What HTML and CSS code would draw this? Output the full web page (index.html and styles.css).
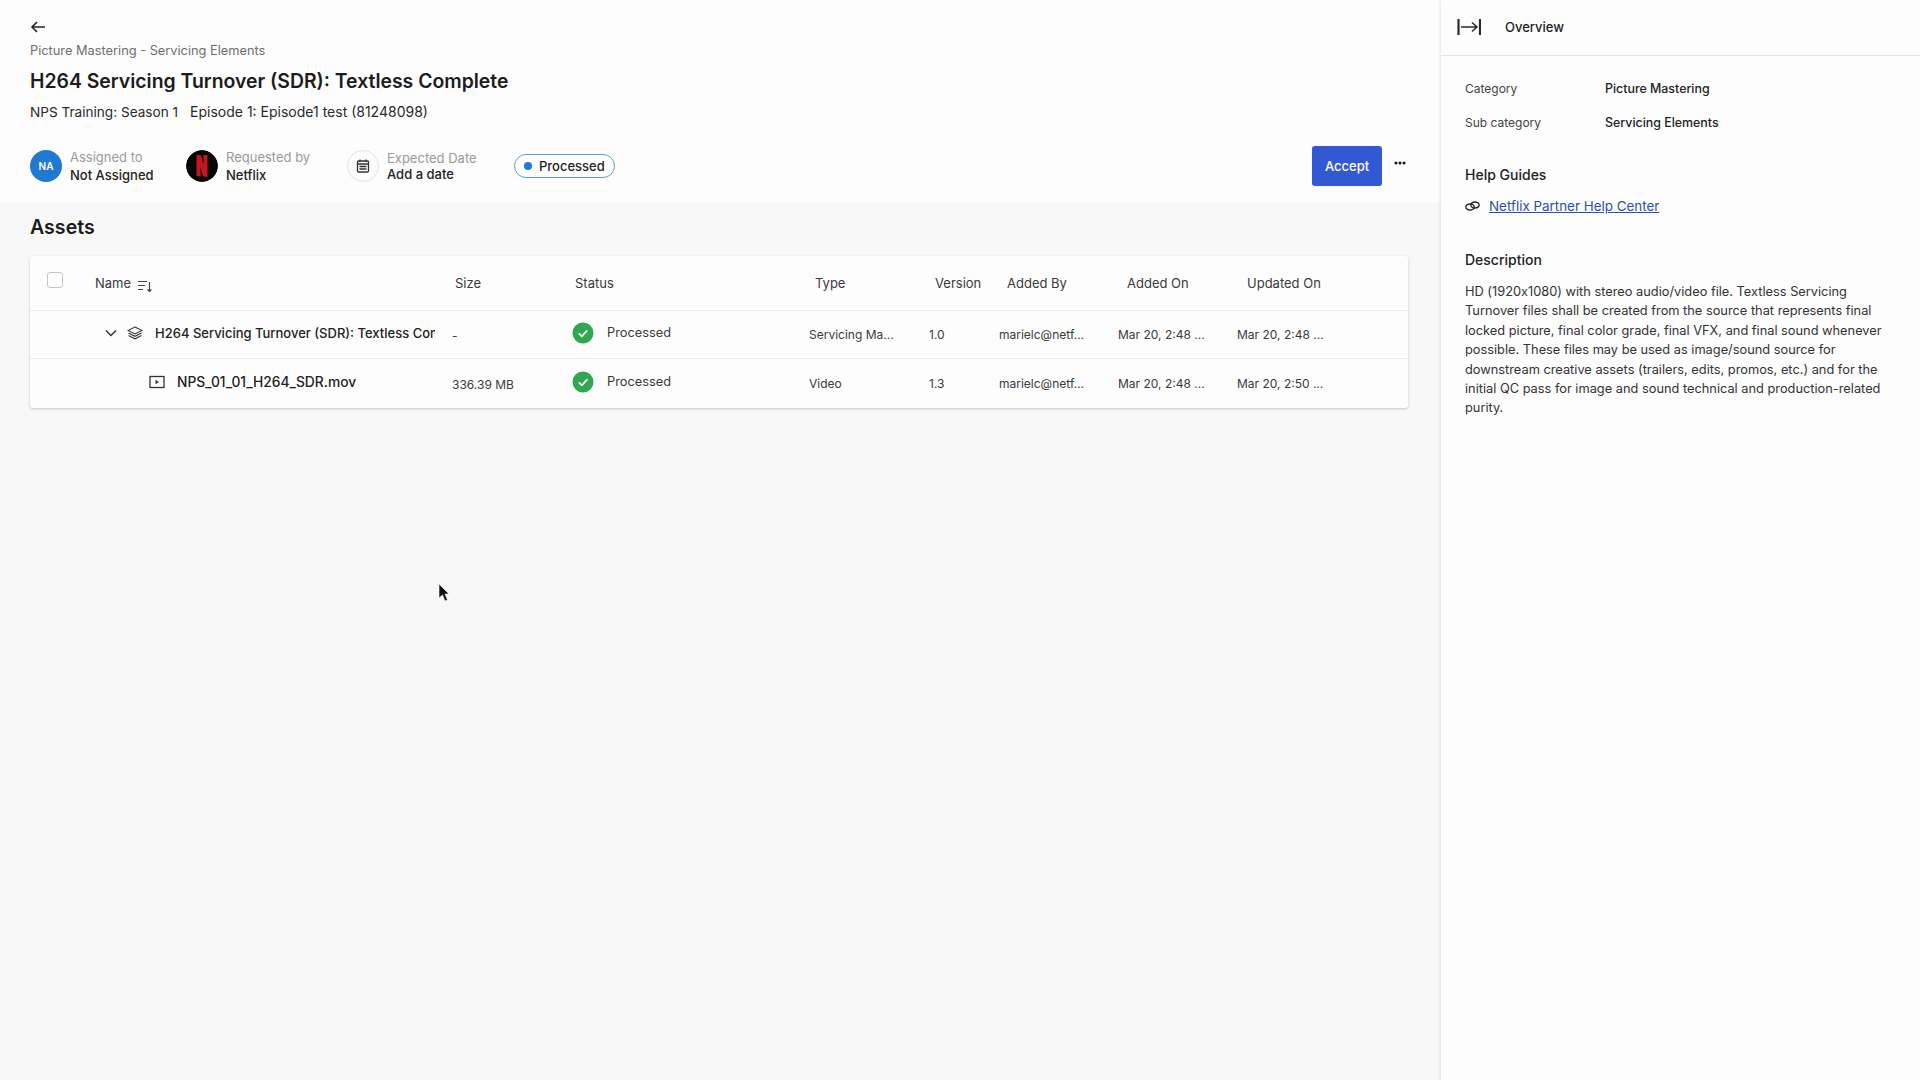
FILE: index.html
```html
<!DOCTYPE html>
<html lang="en">

<head>
	<title>Picture Mastering - Servicing Elements</title>
	<meta charset="utf-8" />
	<link rel="stylesheet" href="styles.css">
</head>

<body>
	<div class="page">
		<main class="main">
			<header class="head">
				<svg class="back" width="16" height="14" viewBox="0 0 16 14" fill="none" stroke="#222" stroke-width="1.6"><path d="M15 7H2M7 2 2 7l5 5"/></svg>
				<div class="crumb">Picture Mastering - Servicing Elements</div>
				<h1>H264 Servicing Turnover (SDR): Textless Complete</h1>
				<div class="sub"><span>NPS Training: Season 1</span><span class="ep">Episode 1: Episode1 test (81248098)</span></div>
				<div class="meta">
					<div class="person assigned">
						<div class="avatar na">NA</div>
						<div><div class="lbl">Assigned to</div><div class="val">Not Assigned</div></div>
					</div>
					<div class="person requested">
						<svg class="avatar" width="32" height="32" viewBox="0 0 32 32"><circle cx="16" cy="16" r="16" fill="#060606"/><path d="M10.500 5h4.200l2.800 9V5h4v22l-4.200-.6-2.800-9V26.400l-4-.5z" fill="#c4161c"/></svg>
						<div><div class="lbl">Requested by</div><div class="val">Netflix</div></div>
					</div>
					<div class="person expected">
						<div class="avatar cal">
							<svg width="14" height="14" viewBox="0 0 14 14" fill="none" stroke="#333" stroke-width="1.300"><rect x="1.500" y="2" width="11" height="11" rx="1"/><path d="M4 .5v2.500M10 .5v2.500M1.500 5h11M3.500 7.500h7M3.500 10h7"/></svg>
						</div>
						<div class="tight"><div class="lbl">Expected Date</div><div class="val">Add a date</div></div>
					</div>
					<div class="pill"><i></i>Processed</div>
					<div class="actions">
						<button class="accept">Accept</button>
						<svg class="dots" width="12" height="4" viewBox="0 0 12 4" fill="#111"><circle cx="2" cy="2" r="1.500"/><circle cx="6" cy="2" r="1.500"/><circle cx="10" cy="2" r="1.500"/></svg>
					</div>
				</div>
			</header>

			<section class="assets">
				<h2>Assets</h2>
				<div class="card">
					<div class="thead">
						<div class="check"></div>
						<div class="th-name">Name
							<svg width="16" height="14" viewBox="0 0 16 14" fill="none" stroke="#444" stroke-width="1.200"><path d="M1 2.500h9M1 6.500h7M1 10.500h5M12.500 3v9.500M10.500 10.500l2 2 2-2"/></svg>
						</div>
						<div>Size</div>
						<div>Status</div>
						<div>Type</div>
						<div>Version</div>
						<div>Added By</div>
						<div>Added On</div>
						<div>Updated On</div>
					</div>
					<div class="trow">
						<div class="name parent">
							<svg width="12" height="8" viewBox="0 0 12 8" fill="none" stroke="#333" stroke-width="1.500"><path d="m1 1.500 5 5 5-5"/></svg>
							<svg class="layers" width="16" height="14" viewBox="0 0 16 14" fill="none" stroke="#333" stroke-width="1.100"><path d="M8 1 15 4.500 8 8 1 4.500zM1.500 7 8 10.300 14.500 7M1.500 9.500 8 12.800 14.500 9.500"/></svg>
							<span class="clip">H264 Servicing Turnover (SDR): Textless Complete</span>
						</div>
						<div class="size">-</div>
						<div class="status">
							<svg width="22" height="22" viewBox="0 0 22 22"><circle cx="11" cy="11" r="10.500" fill="#2fa84f"/><path d="m6.800 11.300 3 3 5.500-6" fill="none" stroke="#fff" stroke-width="1.800"/></svg>
							Processed
						</div>
						<div>Servicing Ma...</div>
						<div>1.0</div>
						<div>marielc@netf...</div>
						<div>Mar 20, 2:48 ...</div>
						<div>Mar 20, 2:48 ...</div>
					</div>
					<div class="trow last">
						<div class="name child">
							<svg width="16" height="14" viewBox="0 0 16 14" fill="none" stroke="#333" stroke-width="1.300"><rect x="1" y="1.500" width="14" height="11"/><path d="M6.500 4.800 10 7l-3.500 2.200z" fill="#333" stroke="none"/></svg>
							<span class="clip">NPS_01_01_H264_SDR.mov</span>
						</div>
						<div class="size">336.39 MB</div>
						<div class="status">
							<svg width="22" height="22" viewBox="0 0 22 22"><circle cx="11" cy="11" r="10.500" fill="#2fa84f"/><path d="m6.800 11.300 3 3 5.500-6" fill="none" stroke="#fff" stroke-width="1.800"/></svg>
							Processed
						</div>
						<div>Video</div>
						<div>1.3</div>
						<div>marielc@netf...</div>
						<div>Mar 20, 2:48 ...</div>
						<div>Mar 20, 2:50 ...</div>
					</div>
				</div>
			</section>
		</main>

		<aside class="panel">
			<div class="panel-head">
				<svg width="24" height="16" viewBox="0 0 24 16" fill="none" stroke="#2a2a2a"><path d="M1.500 0v16M23 0v16" stroke-width="2.200"/><path d="M4 8h16M15 3.500 20 8l-5 4.500" stroke-width="1.500"/></svg>
				<span>Overview</span>
			</div>
			<div class="panel-body">
				<dl class="facts">
					<dt>Category</dt><dd>Picture Mastering</dd>
					<dt>Sub category</dt><dd>Servicing Elements</dd>
				</dl>
				<h3>Help Guides</h3>
				<div class="guide">
					<svg width="15" height="10" viewBox="0 0 15 10" fill="none" stroke="#222" stroke-width="1.300"><ellipse cx="5" cy="6" rx="4.200" ry="3"/><ellipse cx="10" cy="4" rx="4.200" ry="3"/></svg>
					<a href="#">Netflix Partner Help Center</a>
				</div>
				<h4>Description</h4>
				<p>HD (1920x1080) with stereo audio/video file. Textless Servicing Turnover files shall be created from the source that represents final locked picture, final color grade, final VFX, and final sound whenever possible. These files may be used as image/sound source for downstream creative assets (trailers, edits, promos, etc.) and for the initial QC pass for image and sound technical and production-related purity.</p>
			</div>
		</aside>
	</div>
	<svg class="cursor" width="12" height="20" viewBox="0 0 12 20"><path d="M1 1v14l3.500-3 2.500 6 2.500-1-2.500-6H11z" fill="#111" stroke="#fff" stroke-width=".6"/></svg>
</body>

</html>
```

FILE: styles.css
```css
* {
	box-sizing: border-box
}

body,
html {
	height: 100%;
	margin: 0;
	font-family: Inter, "Liberation Sans", sans-serif;
	color: #222;
	background-color: #f8f8f8;
}

.page {
	display: flex;
	height: 100%;
}

.main {
	width: 1441px;
}

/* top block */
.head {
	height: 203px;
	padding: 20px 30px 0;
	background-color: #fdfdfd;
}

.back {
	display: block;
	margin-left: 0;
}

.crumb {
	margin-top: 8px;
	font-size: 12.800px;
	line-height: 18px;
	color: #6f6f6f;
}

h1 {
	margin: 7px 0 0;
	font-size: 19.400px;
	line-height: 28px;
	font-weight: 600;
	color: #1c1c1c;
}

.sub {
	display: flex;
	gap: 12px;
	margin-top: 7px;
	font-size: 13.600px;
	line-height: 20px;
	color: #2a2a2a;
}

.sub .ep {
	font-size: 14px;
}

.meta {
	display: flex;
	align-items: center;
	margin-top: 24px;
	height: 40px;
}

.person {
	display: flex;
	align-items: center;
	gap: 8px;
	font-size: 13px;
}

.assigned {
	width: 156px;
}

.requested {
	width: 161px;
}

.expected {
	width: 167px;
}

.avatar {
	flex: none;
	width: 32px;
	height: 32px;
	border-radius: 50%;
}

.na {
	display: flex;
	align-items: center;
	justify-content: center;
	background-color: #1f78d1;
	color: #fff;
	font-size: 10px;
	font-weight: 600;
}

.cal {
	display: flex;
	align-items: center;
	justify-content: center;
	border: 1px solid #e4e4e4;
}

.lbl {
	line-height: 18px;
	color: #9a9a9a;
}

.val {
	line-height: 18px;
	font-weight: 500;
	color: #222;
}

.tight .lbl,
.tight .val {
	line-height: 16px;
}

.pill {
	display: flex;
	align-items: center;
	gap: 7px;
	width: 101px;
	height: 24px;
	padding-left: 9px;
	border: 1.5px solid #5b9fc4;
	border-radius: 12px;
	background-color: #fff;
	font-size: 13px;
	font-weight: 500;
}

.pill i {
	width: 8px;
	height: 8px;
	border-radius: 50%;
	background-color: #1f78d1;
}

.actions {
	display: flex;
	align-items: center;
	gap: 12px;
	margin-left: auto;
	margin-right: 5px;
}

.accept {
	width: 70px;
	height: 40px;
	border: none;
	border-radius: 3px;
	background-color: #3358d4;
	color: #fff;
	font-family: inherit;
	font-size: 13px;
	font-weight: 500;
}

.dots {
	margin-top: -6px;
}

/* assets table */
.assets {
	padding: 0 33px 0 30px;
}

h2 {
	margin: 0;
	padding-top: 10px;
	font-size: 19.600px;
	line-height: 28px;
	font-weight: 600;
	color: #1c1c1c;
}

.card {
	margin-top: 15px;
	border-radius: 3px;
	background-color: #fdfdfd;
	box-shadow: 0 1px 3px rgba(0, 0, 0, .2);
	font-size: 12px;
	color: #3a3a3a;
}

.thead,
.trow {
	display: grid;
	align-items: center;
}

.thead {
	grid-template-columns: 65px 360px 120px 240px 120px 72px 120px 120px 1fr;
	height: 55px;
	padding-bottom: 1px;
	border-bottom: 1px solid #ececec;
	font-size: 13px;
}

.trow {
	grid-template-columns: 422px 120px 237px 120px 70px 119px 119px 1fr;
	height: 48px;
	border-bottom: 1px solid #ececec;
}

.trow.last {
	height: 49px;
	border-bottom: none;
}

.check {
	width: 16px;
	height: 16px;
	margin: -6px 0 0 17px;
	border: 1px solid #c4c4c4;
	border-radius: 3px;
	background-color: #fff;
}

.th-name {
	display: flex;
	align-items: center;
	gap: 6px;
}

.th-name svg {
	margin-top: 7px;
}

.name {
	display: flex;
	align-items: center;
	margin-top: -4px;
	font-size: 13px;
	font-weight: 500;
	color: #222;
}

.parent {
	padding-left: 75px;
}

.parent .layers {
	margin: 0 12px 0 10px;
}

.parent .clip {
	width: 280px;
}

.child {
	gap: 12px;
	padding-left: 119px;
	font-size: 13.800px;
}

.clip {
	overflow: hidden;
	white-space: nowrap;
}

.size {
	padding-top: 2px;
}

.status {
	display: flex;
	align-items: center;
	gap: 13px;
	margin-top: -4px;
	font-size: 12.800px;
}

/* right side */
.panel {
	flex: 1;
	background-color: #fdfdfd;
	box-shadow: -1px 0 3px rgba(0, 0, 0, .1);
}

.panel-head {
	display: flex;
	align-items: center;
	gap: 24px;
	height: 56px;
	padding: 0 0 1px 16px;
	border-bottom: 1px solid #e4e4e4;
	font-size: 13px;
	font-weight: 500;
}

.panel-body {
	padding: 15px 24px;
	font-size: 13px;
}

.facts {
	display: grid;
	grid-template-columns: 140px 1fr;
	grid-auto-rows: 34px;
	align-items: center;
	margin: 0;
	font-size: 12px;
}

.facts dt {
	color: #444;
}

.facts dd {
	margin: 0;
	font-size: 12.400px;
	font-weight: 500;
}

h3,
h4 {
	margin: 0;
	font-size: 14px;
	line-height: 20px;
	font-weight: 500;
}

h3 {
	margin-top: 26px;
}

.guide {
	display: flex;
	align-items: center;
	gap: 9px;
	margin-top: 11px;
	line-height: 20px;
}

.guide a {
	font-size: 13.400px;
	color: #2f4ea8;
}

h4 {
	margin-top: 34px;
}

p {
	margin: 12px 0 0;
	font-size: 12.800px;
	line-height: 19.400px;
	font-feature-settings: "calt" 0;
	color: #333;
}

.cursor {
	position: absolute;
	left: 438px;
	top: 583px;
}
```
